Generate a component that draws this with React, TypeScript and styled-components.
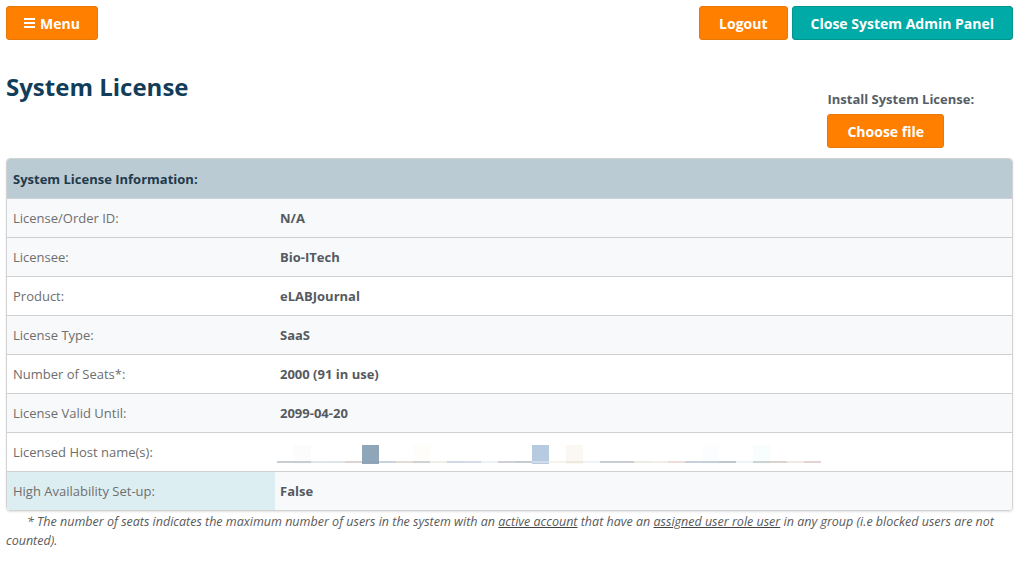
import React from "react";
import styled, { createGlobalStyle } from "styled-components";

const GlobalStyle = createGlobalStyle`
  html, body {
    margin: 0;
    padding: 0;
    background: #fff;
    font-family: "Open Sans", "Noto Sans", sans-serif;
  }
`;

type Row = {
  label: string;
  value?: string;
  striped: boolean;
  highlight?: boolean;
  masked?: boolean;
};

const rows: Row[] = [
  { label: "License/Order ID:", value: "N/A", striped: true },
  { label: "Licensee:", value: "Bio-ITech", striped: true },
  { label: "Product:", value: "eLABJournal", striped: false },
  { label: "License Type:", value: "SaaS", striped: true },
  { label: "Number of Seats*:", value: "2000 (91 in use)", striped: false },
  { label: "License Valid Until:", value: "2099-04-20", striped: true },
  { label: "Licensed Host name(s):", striped: false, masked: true },
  { label: "High Availability Set-up:", value: "False", striped: true, highlight: true },
];

// pixelated host name, one colour per 17px cell along the baseline
const stripColours = [
  "#c8cdd2", "#c8cdd2", "#dde6ef", "#dfe3e6", "#ddd3d0", "#8ea4b6", "#c6d3df", "#e3dbd6",
  "#cfd2d4", "#eeeee4", "#cfd9e3", "#d4dde7", "#eef2f7", "#cfd1d4", "#c6cbd0", "#d0dde8",
  "#f6f3ea", "#efe8e0", "#eef3f8", "#c9cdd1", "#c9ced2", "#ecebe5", "#f3ede9", "#eddcd8",
  "#c6d0da", "#c6d0da", "#bcc7cf", "#eef3f8", "#cfd1d4", "#ddd2d0", "#f0e8e5", "#e4d3d0",
];
const blocks: { i: number; c: string }[] = [
  { i: 5, c: "#8fa5b8" },
  { i: 15, c: "#b6cbe0" },
  { i: 17, c: "#fbf7f2" },
  { i: 1, c: "#fcfcfd" },
  { i: 8, c: "#fefdfa" },
  { i: 25, c: "#fcfdfe" },
  { i: 28, c: "#f8fdfd" },
];

const MaskedHost = () => (
  <svg width={544} height={19} viewBox="0 0 544 19">
    {blocks.map((b) => (
      <rect key={b.i} x={b.i * 17} y={0} width={17} height={19} fill={b.c} />
    ))}
    {stripColours.map((c, i) => (
      <rect key={i} x={i * 17} y={16} width={17} height={2} fill={c} />
    ))}
  </svg>
);

const MenuIcon = () => (
  <svg width={11} height={10} viewBox="0 0 11 10">
    <rect x={0} y={0} width={11} height={2} fill="#fff" />
    <rect x={0} y={4} width={11} height={2} fill="#fff" />
    <rect x={0} y={8} width={11} height={2} fill="#fff" />
  </svg>
);

export default function App() {
  return (
    <Page>
      <GlobalStyle />
      <TopBar>
        <Button $pad={17}>
          <MenuIcon />
          Menu
        </Button>
        <TopActions>
          <Button $pad={19}>Logout</Button>
          <Button $variant="teal" $pad={18}>
            Close System Admin Panel
          </Button>
        </TopActions>
      </TopBar>

      <TitleRow>
        <Title>System License</Title>
        <Install>
          <InstallLabel>Install System License:</InstallLabel>
          <Button $pad={19}>Choose file</Button>
        </Install>
      </TitleRow>

      <Panel>
        <PanelHeader>System License Information:</PanelHeader>
        {rows.map((r) => (
          <InfoRow key={r.label} $striped={r.striped}>
            <Label $highlight={r.highlight}>{r.label}</Label>
            <Value>{r.masked ? <MaskedHost /> : r.value}</Value>
          </InfoRow>
        ))}
      </Panel>

      <Footnote>
        * The number of seats indicates the maximum number of users in the system with an{" "}
        <u>active account</u> that have an <u>assigned user role user</u> in any group (i.e
        blocked users are not counted).
      </Footnote>
    </Page>
  );
}

const Page = styled.div`
  padding: 6px 7px 0 6px;
`;

const TopBar = styled.div`
  display: flex;
  justify-content: space-between;
  align-items: center;
`;

const TopActions = styled.div`
  display: flex;
  gap: 4px;
`;

const Button = styled.button<{ $variant?: "teal"; $pad: number }>`
  display: inline-flex;
  align-items: center;
  justify-content: center;
  gap: 5px;
  height: 34px;
  padding: 0 ${(p) => p.$pad}px;
  border-radius: 3px;
  border: 1px solid ${(p) => (p.$variant === "teal" ? "#00958f" : "#e6780a")};
  background: ${(p) => (p.$variant === "teal" ? "#00aaa6" : "#ff8000")};
  color: #fff;
  font-family: "Open Sans", sans-serif;
  font-weight: 700;
  font-size: 14px;
  cursor: pointer;
  box-sizing: border-box;
`;

const TitleRow = styled.div`
  display: flex;
  justify-content: space-between;
  align-items: flex-start;
  padding-top: 31px;
  margin-bottom: 10px;
`;

const Title = styled.h1`
  margin: 0;
  font-size: 24px;
  font-weight: 700;
  color: #123d5a;
  line-height: 32px;
`;

const Install = styled.div`
  display: flex;
  flex-direction: column;
  align-items: flex-start;
  gap: 6px;
  padding-top: 19px;
  margin-right: 69px;
`;

const InstallLabel = styled.div`
  font-size: 13px;
  font-weight: 700;
  color: #555e66;
  line-height: 18px;
  margin-right: -31px;
`;

const Panel = styled.div`
  border: 1px solid #d3d3d3;
  border-radius: 4px;
  overflow: hidden;
  box-shadow: 0 1px 2px rgba(0, 0, 0, 0.12);
`;

const PanelHeader = styled.div`
  height: 39px;
  display: flex;
  align-items: center;
  padding-left: 6px;
  background: #bacbd3;
  border-bottom: 1px solid #c9d3d8;
  font-size: 13px;
  font-weight: 700;
  color: #1f3a4b;
`;

const InfoRow = styled.div<{ $striped: boolean }>`
  display: grid;
  grid-template-columns: 268px 1fr;
  height: 39px;
  background: ${(p) => (p.$striped ? "#f8f9fb" : "#fff")};
  border-top: 1px solid #cfcfcf;
  box-sizing: border-box;
  &:nth-of-type(2) {
    border-top: none;
    height: 38px;
  }
`;

const Label = styled.div<{ $highlight?: boolean }>`
  display: flex;
  align-items: center;
  padding-left: 6px;
  background: ${(p) => (p.$highlight ? "#ddeef2" : "transparent")};
  font-size: 13px;
  color: #6e6e6e;
`;

const Value = styled.div`
  display: flex;
  align-items: center;
  padding-left: 5px;
  font-size: 13px;
  font-weight: 700;
  color: #555a60;
  svg {
    margin-left: -3px;
    margin-top: 5px;
  }
`;

const Footnote = styled.p`
  margin: 1px 0 0 0;
  text-indent: 21px;
  font-size: 12.5px;
  font-style: italic;
  color: #5a5a5a;
  line-height: 19px;
  u {
    text-decoration-color: #444;
  }
`;
